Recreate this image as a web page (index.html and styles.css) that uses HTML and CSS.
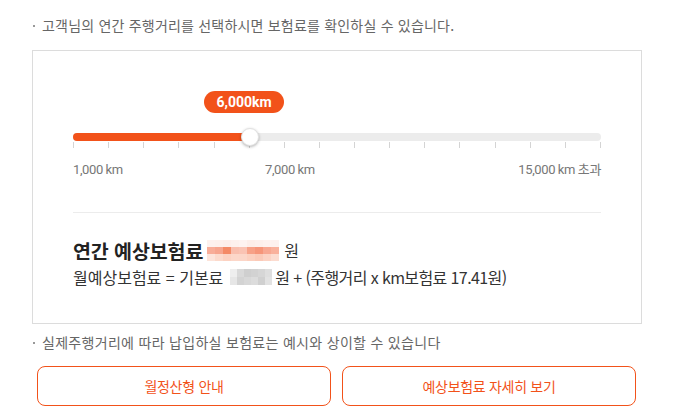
FILE: index.html
```html
<!DOCTYPE html>
<html lang="ko">
<head>
<meta charset="utf-8">
<link rel="stylesheet" href="styles.css">
</head>
<body>
<div class="page">
  <p class="note">고객님의 연간 주행거리를 선택하시면 보험료를 확인하실 수 있습니다.</p>
  <div class="card">
    <div class="slider">
      <div class="bubble" style="left: 131px">6,000km</div>
      <div class="track">
        <div class="fill" style="width: 177px"></div>
        <div class="thumb" style="left: 177px"></div>
      </div>
      <div class="ticks">
        <i></i><i></i><i></i><i></i><i></i><i></i><i></i><i></i><i></i><i></i><i></i><i></i><i></i><i></i><i></i><i></i>
      </div>
      <div class="labels">
        <span class="lab first">1,000 km</span>
        <span class="lab">7,000 km</span>
        <span class="lab last">15,000 km 초과</span>
      </div>
    </div>
    <div class="divider"></div>
    <div class="result">
      <div class="annual"><strong>연간 예상보험료</strong><span class="blur orange"><i style="background:#fdf1ee"></i><i style="background:#fdf0ec"></i><i style="background:#fdeeea"></i><i style="background:#fdf1ed"></i><i style="background:#fef3f0"></i><i style="background:#fdeee9"></i><i style="background:#fdf0ec"></i><i style="background:#fef2ef"></i><i style="background:#fdf1ee"></i><i style="background:#f8ad98"></i><i style="background:#f7a58e"></i><i style="background:#f48a66"></i><i style="background:#f9bfae"></i><i style="background:#fac3b3"></i><i style="background:#f7a187"></i><i style="background:#f6967a"></i><i style="background:#f8a892"></i><i style="background:#f9b19c"></i><i style="background:#fde4da"></i><i style="background:#fcdacc"></i><i style="background:#fcd2c2"></i><i style="background:#fcd7c9"></i><i style="background:#fcd6c8"></i><i style="background:#fcd0bf"></i><i style="background:#fbcab8"></i><i style="background:#fcd3c4"></i><i style="background:#fcdcd0"></i></span><span class="won">원</span></div>
      <div class="monthly"><span class="m1">월예상보험료 = 기본료</span><span class="blur gray"><i style="background:#eeeeee"></i><i style="background:#d9d9d9"></i><i style="background:#cfcfcf"></i><i style="background:#d2d2d2"></i><i style="background:#d6d6d6"></i><i style="background:#dedede"></i><i style="background:#e6e6e6"></i><i style="background:#d3d3d3"></i><i style="background:#d8d8d8"></i><i style="background:#dcdcdc"></i><i style="background:#d0d0d0"></i><i style="background:#e2e2e2"></i></span><span class="m2">원 + (주행거리 x km보험료 17.41원)</span></div>
    </div>
  </div>
  <p class="note note-bottom">실제주행거리에 따라 납입하실 보험료는 예시와 상이할 수 있습니다</p>
  <div class="buttons">
    <button class="btn">월정산형 안내</button>
    <button class="btn">예상보험료 자세히 보기</button>
  </div>
</div>
</body>
</html>
```

FILE: styles.css
```css
* { box-sizing: border-box; }
html, body { margin: 0; padding: 0; background: #fff; }
body {
  font-family: "Noto Sans CJK KR", "Noto Sans", sans-serif;
  color: #333;
  width: 682px;
  height: 414px;
  overflow: hidden;
}
.page {
  padding: 15px 40px 0 32px;
}
.note {
  margin: 0;
  padding-left: 10px;
  position: relative;
  font-size: 14px;
  line-height: 20px;
  color: #666;
  letter-spacing: 0.2px;
  white-space: nowrap;
}
.note::before {
  content: "";
  position: absolute;
  left: 1px;
  top: 10px;
  width: 2px;
  height: 2px;
  background: #999;
}
.card {
  margin-top: 15px;
  width: 610px;
  height: 274px;
  border: 1px solid #dcdcdc;
  padding: 40px 40px 0 40px;
}
.slider {
  position: relative;
  padding-top: 42px;
}
.bubble {
  position: absolute;
  top: 0;
  width: 80px;
  height: 22px;
  border-radius: 11px;
  background: #f2521a;
  color: #fff;
  font-family: Roboto, "Noto Sans CJK KR", sans-serif;
  font-weight: 700;
  font-size: 14px;
  line-height: 22px;
  text-align: center;
}
.track {
  position: relative;
  height: 8px;
  border-radius: 4px;
  background: #ececec;
}
.fill {
  height: 8px;
  border-radius: 4px;
  background: #f2521a;
}
.thumb {
  position: absolute;
  top: 50%;
  width: 18px;
  height: 18px;
  margin: -9px 0 0 -9px;
  border-radius: 50%;
  background: #fff;
  border: 1px solid #e2e2e2;
  box-shadow: 0 1px 3px rgba(0,0,0,0.3);
}
.ticks {
  display: flex;
  justify-content: space-between;
  margin-top: 1px;
  height: 6px;
}
.ticks i {
  width: 1px;
  height: 6px;
  background: #d4d4d4;
}
.labels {
  display: flex;
  margin-top: 14px;
  font-family: Roboto, "Noto Sans CJK KR", sans-serif;
  font-size: 13px;
  line-height: 16px;
  color: #777;
  letter-spacing: -0.4px;
}
.lab.first { width: 192px; }
.lab.last { margin-left: auto; }
.divider {
  margin-top: 34px;
  height: 1px;
  background: #ececec;
}
.result {
  margin-top: 25px;
}
.annual {
  display: flex;
  align-items: center;
  height: 24px;
  color: #222;
}
.annual strong {
  font-size: 19.5px;
  font-weight: 700;
  letter-spacing: -0.1px;
}
.blur {
  display: inline-grid;
}
.blur i { display: block; }
.blur.orange {
  grid-template-columns: repeat(9, 8px);
  grid-auto-rows: 7px;
  margin-left: 4px;
}
.blur.gray {
  grid-template-columns: repeat(6, 7px);
  grid-auto-rows: 8px;
  margin: 0 3px 0 7px;
}
.won {
  margin-left: 5px;
  font-size: 16px;
  color: #333;
}
.monthly {
  display: flex;
  align-items: center;
  margin-top: 5px;
  height: 20px;
  font-size: 16px;
  color: #333;
  white-space: nowrap;
}
.m1 { letter-spacing: 0; }
.m2 { letter-spacing: -0.6px; }
.note-bottom {
  margin-top: 8px;
  letter-spacing: 0.3px;
}
.buttons {
  display: flex;
  gap: 11px;
  margin: 14px 0 0 5px;
}
.btn {
  width: 294px;
  height: 40px;
  border: 1px solid #f2521a;
  border-radius: 8px;
  background: #fff;
  color: #f2521a;
  font-family: "Noto Sans CJK KR", sans-serif;
  font-size: 14px;
  letter-spacing: -0.3px;
  padding: 0;
}
```
